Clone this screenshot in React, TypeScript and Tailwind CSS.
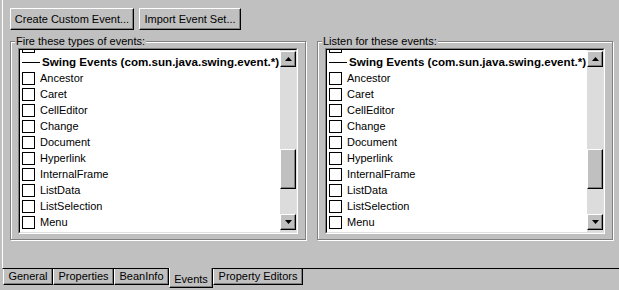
import React from "react";

const EVENTS = [
  "Ancestor",
  "Caret",
  "CellEditor",
  "Change",
  "Document",
  "Hyperlink",
  "InternalFrame",
  "ListData",
  "ListSelection",
  "Menu",
];

const TABS = [
  { label: "General", w: "w-[50px]" },
  { label: "Properties", w: "w-[61px]" },
  { label: "BeanInfo", w: "w-[55px]" },
  { label: "Events", w: "w-[44px]", active: true },
  { label: "Property Editors", w: "w-[90px]" },
];

function Button({ children, w }: { children: React.ReactNode; w: string }) {
  return (
    <button
      className={`${w} h-[22px] border border-t-white border-l-white border-r-black border-b-black bg-[#c0c0c0] text-center text-black shadow-[inset_-1px_-1px_0_#808080]`}
    >
      {children}
    </button>
  );
}

function Arrow({ down }: { down?: boolean }) {
  return (
    <div className="flex h-4 w-4 items-center justify-center border border-t-white border-l-white border-r-black border-b-black bg-[#c0c0c0] shadow-[inset_-1px_-1px_0_#808080]">
      <svg width="7" height="4" viewBox="0 0 7 4" aria-hidden="true">
        {down ? <path d="M0 0h7L3.5 4z" fill="#000" /> : <path d="M0 4h7L3.5 0z" fill="#000" />}
      </svg>
    </div>
  );
}

function CheckRow({ label }: { label?: string }) {
  return (
    <div className="flex h-4 items-center">
      <span className="ml-[2px] h-[13px] w-[13px] shrink-0 border border-black bg-white" />
      {label && <span className="ml-[5px]">{label}</span>}
    </div>
  );
}

function EventList() {
  return (
    <div className="flex-1 border border-t-[#808080] border-l-[#808080] border-r-white border-b-white">
      <div className="flex h-[184px] border border-t-black border-l-black border-r-[#dfdfdf] border-b-[#dfdfdf] bg-white">
        <div className="flex-1 overflow-hidden">
          <div className="-mt-[12px]">
            <CheckRow />
            <div className="flex h-4 items-center whitespace-nowrap">
              <span className="ml-[2px] h-px w-[18px] shrink-0 bg-black" />
              <span className="ml-[2px] text-[11.6px] font-bold">Swing Events (com.sun.java.swing.event.*)</span>
            </div>
            {EVENTS.map((e) => (
              <CheckRow key={e} label={e} />
            ))}
          </div>
        </div>
        {/* scrollbar */}
        <div className="flex w-4 flex-col bg-[#dcdcdc] pt-px">
          <Arrow />
          <div className="relative flex-1">
            <div className="absolute left-0 top-[82px] h-[40px] w-4 border border-t-white border-l-white border-r-black border-b-black bg-[#c0c0c0] shadow-[inset_-1px_-1px_0_#808080]" />
          </div>
          <Arrow down />
          <div className="h-[2px]" />
        </div>
      </div>
    </div>
  );
}

function Group({ title }: { title: string }) {
  return (
    <div className="relative h-[199px] w-[296px] border border-[#808080] px-[7px] pb-[5px] pt-[6px] shadow-[inset_1px_1px_0_#fff,1px_1px_0_#fff]">
      <span className="absolute -top-[7px] left-[4px] bg-[#c0c0c0] px-px leading-[13px]">{title}</span>
      <div className="flex h-full">
        <EventList />
      </div>
    </div>
  );
}

export default function App() {
  return (
    <div className="h-[290px] w-[619px] overflow-hidden bg-[#c0c0c0] font-['Liberation_Sans',Arial,sans-serif] text-[11px] text-black">
      <div className="ml-[2px] h-[269px] border-b border-l border-b-black border-l-white pl-[7px] pt-[8px]">
        <div className="flex gap-[5px]">
          <Button w="w-[124px]">Create Custom Event...</Button>
          <Button w="w-[102px]">Import Event Set...</Button>
        </div>
        <div className="mt-[11px] flex gap-[11px]">
          <Group title="Fire these types of events:" />
          <Group title="Listen for these events:" />
        </div>
      </div>
      <div className="ml-[3px] flex items-start">
        {TABS.map((t) =>
          t.active ? (
            <div
              key={t.label}
              className={`${t.w} -mt-px flex h-[20px] items-center justify-center border-x border-b border-l-white border-r-black border-b-black bg-[#c0c0c0] pt-[3px] shadow-[inset_-1px_-1px_0_#808080]`}
            >
              {t.label}
            </div>
          ) : (
            <div
              key={t.label}
              className={`${t.w} flex h-[16px] items-center justify-center border-x border-b border-l-white border-r-black border-b-black shadow-[inset_-1px_-1px_0_#808080]`}
            >
              {t.label}
            </div>
          )
        )}
      </div>
    </div>
  );
}
